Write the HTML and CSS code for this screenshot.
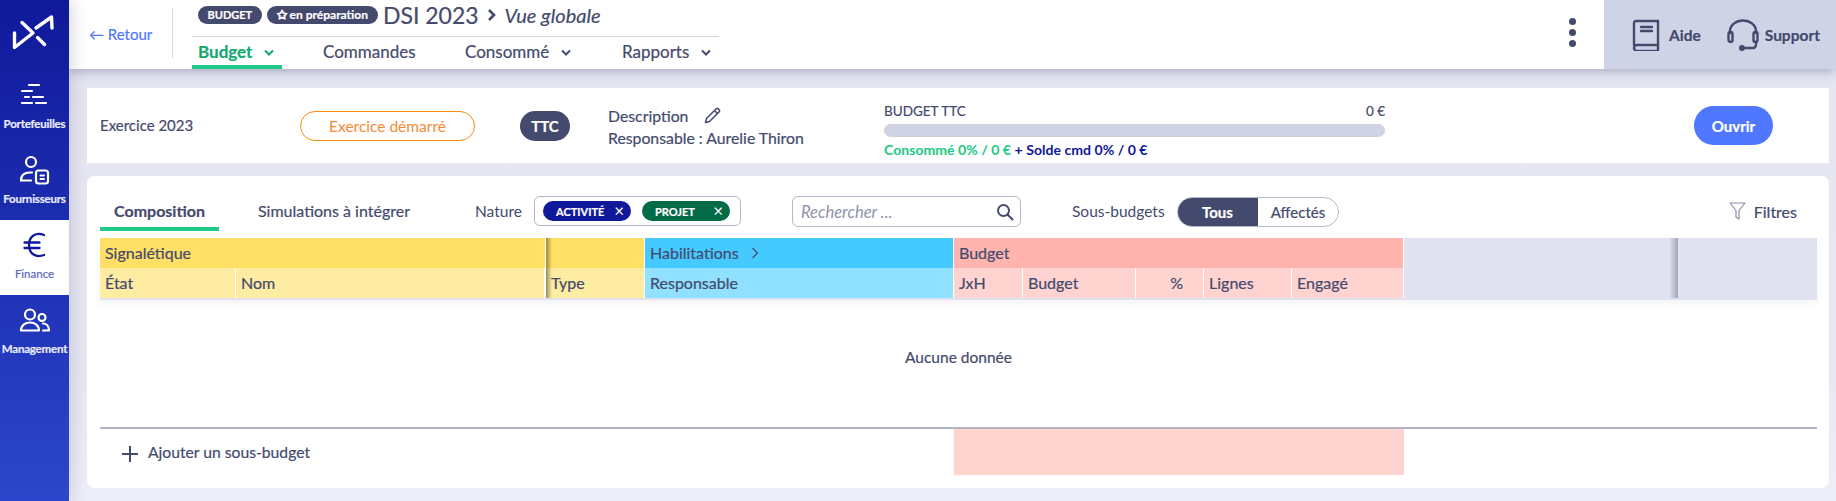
FILE: index.html
```html
<!DOCTYPE html>
<html lang="fr">
<head>
  <meta charset="UTF-8" />
  <title>DSI 2023 - Vue globale</title>
  <link rel="stylesheet" href="styles.css">
</head>
<body>
<div class="app">
  <nav class="side">
    <div class="logo">
      <svg width="69" height="70" viewBox="0 0 69 70" fill="none" stroke="#fff" stroke-width="3.4" stroke-linecap="round" stroke-linejoin="round">
        <path d="M14.500 33v14.500L33 33 22 22.500"/><path d="M36 28L51.500 17l.5 11"/><path d="M37.500 37.500l7 7"/>
      </svg>
    </div>
    <a class="side-item">
      <span class="slot">
        <svg width="30" height="24" viewBox="0 0 30 24" fill="none" stroke="#fff" stroke-width="2.2" stroke-linecap="round">
          <path d="M9 2h10M2 8h10M5 14h4M13 14h10M2 20h10M16 20h10"/>
        </svg>
      </span>
      <span>Portefeuilles</span>
    </a>
    <a class="side-item">
      <span class="slot">
        <svg width="32" height="30" viewBox="0 0 32 30" fill="none" stroke="#fff" stroke-width="2.2" stroke-linecap="round" stroke-linejoin="round">
          <circle cx="12" cy="7" r="5"/><path d="M2 25.500c0-5 3-8 9-8h2"/><path d="M2 25.500h10"/><rect x="17" y="15.500" width="12" height="13" rx="2.500"/><path d="M21.500 20.500h3.500M21.500 24h3.500" stroke-width="2"/>
        </svg>
      </span>
      <span>Fournisseurs</span>
    </a>
    <a class="side-item active">
      <span class="slot">
        <svg width="24" height="26" viewBox="0 0 24 26" fill="none" stroke="#10199a" stroke-width="2.300" stroke-linecap="round">
          <path d="M21 3C13 0 6 4 6 13s7 13 15 10"/><path d="M1.500 10.500h15M1.500 16h15"/>
        </svg>
      </span>
      <span>Finance</span>
    </a>
    <a class="side-item">
      <span class="slot">
        <svg width="32" height="26" viewBox="0 0 32 26" fill="none" stroke="#fff" stroke-width="2.2" stroke-linecap="round" stroke-linejoin="round">
          <circle cx="11" cy="7.500" r="5"/><circle cx="23" cy="10.500" r="3.500"/><path d="M2 23.500c0-5 4-8 9-8s9 3 9 8z"/><path d="M24 16.500c3.500 0 6 3 6 7h-6"/>
        </svg>
      </span>
      <span>Management</span>
    </a>
  </nav>

  <div class="main">
    <header class="top">
      <a class="back"><span class="back-arrow">←</span> Retour</a>
      <div class="heading">
        <div class="title-row">
          <span class="badge">BUDGET</span>
          <span class="badge light">✩ en préparation</span>
          <span class="title">DSI 2023</span>
          <svg class="crumb" width="10" height="14" viewBox="0 0 10 14" fill="none" stroke="#444a6d" stroke-width="2.6"><path d="M2 2l5 5-5 5"/></svg>
          <em class="subtitle">Vue globale</em>
        </div>
        <div class="menu">
          <a class="menu-item current">Budget <svg width="12" height="8" viewBox="0 0 12 8" fill="none" stroke="currentColor" stroke-width="2"><path d="M2 1.500l4 4 4-4"/></svg></a>
          <a class="menu-item w-cmd">Commandes</a>
          <a class="menu-item w-cons">Consommé <svg width="12" height="8" viewBox="0 0 12 8" fill="none" stroke="currentColor" stroke-width="2"><path d="M2 1.500l4 4 4-4"/></svg></a>
          <a class="menu-item w-rap">Rapports <svg width="12" height="8" viewBox="0 0 12 8" fill="none" stroke="currentColor" stroke-width="2"><path d="M2 1.500l4 4 4-4"/></svg></a>
        </div>
      </div>
      <div class="dots"><i></i><i></i><i></i></div>
      <div class="help">
        <a class="help-link">
          <svg width="28" height="32" viewBox="0 0 28 32" fill="none" stroke="#444a6d" stroke-width="2.4" stroke-linejoin="round" stroke-linecap="round">
            <path d="M2 26V4a2 2 0 0 1 2-2h22v24H5a3 3 0 0 0 0 6h21"/><path d="M9 8h11M9 12h11" /><path d="M26 26v5"/>
          </svg>
          Aide
        </a>
        <a class="help-link">
          <svg width="32" height="32" viewBox="0 0 32 32" fill="none" stroke="#444a6d" stroke-width="2.4" stroke-linecap="round">
            <path d="M3 14v-2a13 10.500 0 0 1 26 0v2"/><rect x="1.500" y="13" width="4" height="10" rx="2"/><rect x="26.500" y="13" width="4" height="10" rx="2"/><path d="M29 23v3a3 3 0 0 1-3 3h-9"/><circle cx="15" cy="29" r="1.800" fill="#444a6d"/>
          </svg>
          Support
        </a>
      </div>
    </header>

    <div class="content">
      <section class="card summary">
        <div class="ex-name">Exercice 2023</div>
        <div class="ex-state">Exercice démarré</div>
        <div class="ttc">TTC</div>
        <div class="desc">
          <div>Description
            <svg class="pencil" width="17" height="17" viewBox="0 0 17 17" fill="none" stroke="#444a6d" stroke-width="1.500" stroke-linejoin="round"><path d="M1.500 15.500l1-4L12 2a1.800 1.800 0 0 1 2.500 0l.5.5a1.800 1.800 0 0 1 0 2.500l-9.500 9.500z"/><path d="M10.500 3.500l3 3"/></svg>
          </div>
          <div>Responsable : Aurelie Thiron</div>
        </div>
        <div class="gauge">
          <div class="gauge-head"><span>BUDGET TTC</span><span>0 €</span></div>
          <div class="gauge-bar"></div>
          <div class="gauge-foot"><b class="green">Consommé 0% / 0 €</b> <b class="navy">+ Solde cmd 0% / 0 €</b></div>
        </div>
        <button class="open">Ouvrir</button>
      </section>

      <section class="card detail">
        <div class="tools">
          <div class="tabs">
            <a class="tab on">Composition</a>
            <a class="tab second">Simulations à intégrer</a>
          </div>
          <span class="lbl nature">Nature</span>
          <div class="chips">
            <span class="chip blue">ACTIVITÉ <span class="x">×</span></span>
            <span class="chip dgreen">PROJET <span class="x">×</span></span>
          </div>
          <div class="search">
            <span>Rechercher ...</span>
            <svg width="18" height="18" viewBox="0 0 18 18" fill="none" stroke="#444a6d" stroke-width="2" stroke-linecap="round"><circle cx="7.500" cy="7.500" r="5.500"/><path d="M11.500 11.500l5 5"/></svg>
          </div>
          <span class="lbl sous">Sous-budgets</span>
          <div class="toggle"><span class="t-on">Tous</span><span class="t-off">Affectés</span></div>
          <a class="filters">
            <svg width="17" height="18" viewBox="0 0 17 18" fill="none" stroke="#8a8ea8" stroke-width="1.200" stroke-linejoin="round"><path d="M1 1h15l-6 7.500V17l-3-2V8.500z"/></svg>
            Filtres
          </a>
        </div>

        <div class="tbl">
          <div class="group y span-two">Signalétique</div>
          <div class="group y sticky"></div>
          <div class="group b">Habilitations <svg width="8" height="12" viewBox="0 0 8 12" fill="none" stroke="#444a6d" stroke-width="1.200"><path d="M1.500 1l5 5-5 5"/></svg></div>
          <div class="group r">Budget</div>
          <div class="group rest"></div>

          <div class="col y2">État</div>
          <div class="col y2">Nom</div>
          <div class="col y2 sticky">Type</div>
          <div class="col b2">Responsable</div>
          <div class="col r2">JxH</div>
          <div class="col r2">Budget</div>
          <div class="col r2 pct">%</div>
          <div class="col r2">Lignes</div>
          <div class="col r2">Engagé</div>
          <div class="col rest2"></div>
        </div>

        <div class="empty">Aucune donnée</div>

        <div class="foot">
          <a class="add"><span class="plus"></span>Ajouter un sous-budget</a>
          <div class="foot-pink"></div>
        </div>
      </section>
    </div>
  </div>
</div>
</body>
</html>
```

FILE: styles.css
```css
*{box-sizing:border-box}
html,body{margin:0;height:501px;overflow:hidden}
body{font-family:"Lato","Noto Sans",sans-serif;font-size:15px;color:#444a6d;background:#e8e8f4;-webkit-text-stroke:.2px}
a{color:inherit;text-decoration:none}

.app{display:flex;height:501px}

/* barre laterale */
.side{width:69px;flex:none;background:linear-gradient(180deg,#10199a 0%,#2c46cb 100%);color:#fff;box-shadow:4px 0 14px rgba(60,64,110,.18);z-index:3}
.logo{height:70px}
.logo svg{display:block}
.side-item{height:75px;display:flex;flex-direction:column;align-items:center;padding-top:7px;font-size:11.500px;line-height:16px;font-weight:700;letter-spacing:-.2px;white-space:nowrap;color:#e9ecff;overflow:hidden}
.slot{height:35px;margin-bottom:4px;display:flex;align-items:center;flex:none}
.side-item.active{background:#fff;color:#5c67c4;font-weight:400;letter-spacing:0}

.main{flex:1;min-width:0;display:flex;flex-direction:column}

/* en-tete */
.top{height:69px;flex:none;background:#fff;display:flex;box-shadow:0 1px 12px rgba(60,64,110,.45);z-index:2;position:relative}
.back{width:104px;margin:8px 0 11px;padding:17px 0 0 20px;border-right:1px solid #d6d6dc;color:#4f77ff;white-space:nowrap}
.heading{width:527px;margin-left:19px;display:flex;flex-direction:column}
.title-row{height:37px;border-bottom:1px solid #d6d6dc;display:flex;align-items:center;gap:5px;padding:0 0 5px 6px}
.badge{background:#444a6d;color:#fff;height:18px;line-height:18px;border-radius:9px;padding:0 9.500px;font-size:11px;font-weight:700;white-space:nowrap}
.badge.light{font-size:12px;padding:0 10px}
.title{font-size:23px;white-space:nowrap}
.crumb{margin:0 3px}
.subtitle{font-size:20px;white-space:nowrap}
.menu{display:flex;height:33px}
.menu-item{font-size:17px;padding-top:4px;white-space:nowrap}
.menu-item svg{margin-left:6px;vertical-align:1px}
.menu-item.current{width:90px;padding-left:6px;color:#14a871;font-weight:700;border-bottom:4px solid #20c985}
.w-cmd{margin-left:41px;width:142px}
.w-cons{width:157px}

.dots{margin-left:auto;width:64px;display:flex;flex-direction:column;align-items:center;padding-top:18px;gap:4px}
.dots i{width:7px;height:7px;border-radius:50%;background:#444a6d}
.help{width:232px;background:#cfd3e6;display:flex;align-items:center;gap:26px;padding:0 0 0 28px;font-weight:700;font-size:15.500px}
.help-link{display:flex;align-items:center;gap:9px}
.help-link + .help-link{gap:6px}

/* contenu */
.content{flex:1;padding:19px 7px 0 18px;display:flex;flex-direction:column;gap:13px;background:linear-gradient(180deg,#e6e6f2 0%,#e8e8f4 70%,#eeeef9 100%)}
.card{background:#fff}
.summary{height:75px;display:flex;align-items:center;padding-left:13px;flex:none}
.ex-name{width:200px;margin-top:-2px}
.ex-state{width:175px;height:30px;border:1px solid #f58a0c;border-radius:15px;color:#f58a35;text-align:center;line-height:28px;font-size:15.500px;-webkit-text-stroke:0}
.ttc{width:50px;height:30px;margin-left:45px;border-radius:15px;background:#444a6d;color:#fff;text-align:center;line-height:30px;font-weight:700}
.desc{margin-left:38px;margin-top:2px;width:276px;line-height:22px;font-size:15.800px;white-space:nowrap}
.pencil{margin-left:12px;vertical-align:-2px}
.gauge{width:501px;margin-top:10px}
.gauge-head{display:flex;justify-content:space-between;font-size:13.500px;line-height:16px}
.gauge-bar{height:13px;background:#cfd3e6;border-radius:7px;border:1px solid #d8cfd6;margin:5px 0}
.gauge-foot{font-size:14.100px;line-height:16px;white-space:nowrap;-webkit-text-stroke:0}
.green{color:#20c985}
.navy{color:#10199a}
.open{margin-left:309px;width:79px;height:39px;border:0;border-radius:20px;background:#4f77ff;color:#fff;font:700 15px "Lato","Noto Sans",sans-serif}

.detail{flex:none;height:312px;border-radius:8px;padding:0 12px 0 13px;display:flex;flex-direction:column}
.tools{height:62px;display:flex;align-items:flex-start;flex:none;padding-top:21px;white-space:nowrap}
.tabs{width:375px;display:flex;flex:none;margin-top:-1px}
.tab{font-size:16px;height:35px;line-height:30px}
.tab.on{width:119px;text-align:center;font-weight:700;border-bottom:4px solid #20c985}
.tab.second{margin-left:39px}
.lbl{font-size:15.500px;line-height:28px;-webkit-text-stroke:0}
.nature{width:59px;flex:none}
.chips{width:207px;height:30px;border:1px solid #b7b8cb;border-radius:6px;display:flex;align-items:center;gap:11px;padding:0 10px 0 8px;margin-top:-1px}
.chip{flex:1;height:20px;border-radius:10px;color:#fff;font-size:11px;font-weight:700;display:flex;align-items:center;justify-content:space-between;padding:0 7px 0 13px}
.chip .x{font-size:17px;font-weight:400;line-height:18px;-webkit-text-stroke:0}
.blue{background:#10199a}
.dgreen{background:#016a47}
.search{width:229px;height:31px;margin-left:51px;margin-top:-1px;border:1px solid #b7b8cb;border-radius:6px;display:flex;align-items:center;justify-content:space-between;padding:0 6px 0 8px;font-style:italic;font-size:16.500px;color:#8f93a8;-webkit-text-stroke:0}
.sous{margin-left:51px;width:105px;flex:none}
.toggle{display:flex;width:162px;height:30px;border:1px solid #b7b8cb;border-radius:15px;overflow:hidden;line-height:28px;text-align:center;font-weight:700}
.t-on{width:81px;background:#444a6d;color:#fff;margin:-1px 0 -1px -1px;line-height:30px}
.t-off{flex:1;font-weight:400}
.filters{margin-left:auto;padding-right:20px;display:flex;align-items:center;gap:8px;font-size:16px;height:28px}

/* tableau */
.tbl{display:grid;flex:none;height:62px;grid-template-columns:136px 309px 100px 309px 69px 113px 68px 88px 112px 413px;grid-template-rows:30px 30px;border-bottom:2px solid #e0e2ef;box-shadow:0 4px 8px rgba(60,64,110,.06);font-size:16px}
.span-two{grid-column:1 / span 2}
.group{line-height:30px;padding-left:5px;white-space:nowrap}
.group svg{margin-left:8px}
.group.b{grid-column:4}
.group.r{grid-column:5 / span 5}
.group.rest{grid-column:10}
.col{line-height:30px;padding-left:5px;border-right:1px solid #fff;white-space:nowrap}
.y{background:#ffdf66}
.y2{background:#ffeca3}
.y.sticky{border-right:1px solid #fff}
.b{background:#45caff;border-right:1px solid #fff}
.b2{background:#90e0ff}
.r{background:#ffb5ae;border-right:1px solid #fff}
.r2{background:#ffd4d0}
.rest,.rest2{background:#e0e2ef;position:relative;border:0}
.sticky{position:relative;border-left:1px solid #fff}
.sticky:before,.rest:after,.rest2:after{content:"";position:absolute;top:0;bottom:0;width:9px;background:linear-gradient(90deg,rgba(68,74,109,0),rgba(68,74,109,.4))}
.sticky:before{left:0;width:6px;background:linear-gradient(90deg,rgba(90,80,30,.6),rgba(90,80,30,0))}
.rest:after,.rest2:after{left:265px}
.pct{text-align:right;padding:0 20px 0 0}

.empty{height:127px;flex:none;text-align:center;padding-top:48px;font-size:15.500px}
.foot{flex:1;display:flex;border-top:2px solid #b3b4c4}
.add{width:854px;flex:none;display:flex;align-items:flex-start;padding:14px 0 0 22px;font-size:15.700px;white-space:nowrap}
.plus{position:relative;width:16px;height:16px;margin-right:10px;top:3px;background:linear-gradient(#444a6d,#444a6d) center/16px 2px no-repeat,linear-gradient(#444a6d,#444a6d) center/2px 16px no-repeat}
.foot-pink{width:450px;height:46px;background:#ffd4d0}
```
